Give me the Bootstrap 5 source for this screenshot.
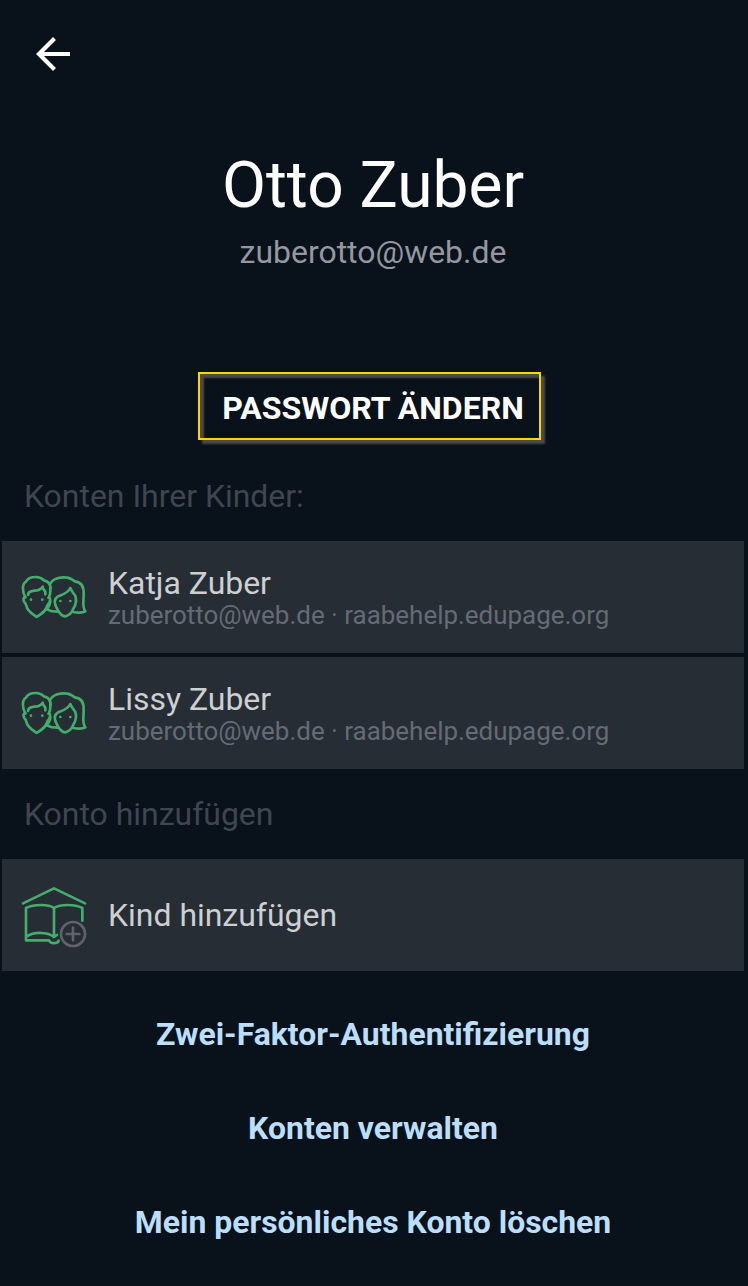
<!DOCTYPE html>
<html lang="de">
<head>
<meta charset="utf-8">
<meta name="viewport" content="width=device-width, initial-scale=1">
<title>Otto Zuber</title>
<link href="https://cdn.jsdelivr.net/npm/bootstrap@5.3.0/dist/css/bootstrap.min.css" rel="stylesheet">
<style>
  body { background: #09111b; color: #fff; font-family: Roboto, sans-serif; font-size: 31.95px; line-height: 38px; }
  .app-screen { height: 1286px; overflow: hidden; white-space: nowrap; padding: 0 4px 0 2px; }
  .back-link { margin: 34px 0 0 31px; width: 40px; height: 40px; }
  .profile-name { font-size: 64px; line-height: 76px; margin-top: 74px; font-weight: 400; }
  .profile-mail { color: #94979f; margin-top: 9px; }
  .btn-password { width: 343px; height: 68px; margin: 101px 0 0 196px; padding: 3px 0 0 7px; border: 2px solid #ffd500; border-radius: 0; color: #fff; font-size: 32px; line-height: 38px; font-weight: 700;
    box-shadow: 4px 4px 2px #4b4b4b, inset 4px 4px 2px #4b4b4b; }
  .section-title { color: #41454f; padding-left: 22px; margin: 26px 0; }
  .btn-password + .section-title { margin-top: 37px; }
  .account-list { gap: 4px; }
  .account { height: 112px; background: #262d35; color: #cdcfd2; padding-left: 18px; gap: 18px; }
  .account-name { line-height: 36px; padding-top: 1px; margin-bottom: -1px; }
  .account-info { font-size: 25.95px; line-height: 30px; color: #666a74; }
  .account svg, .back-link svg { display: block; flex: none; }
  .icon-children { margin-bottom: 2px; }
  .icon-school { margin-top: 4px; }
  .action-list { gap: 56px; margin-top: 44px; }
  .action-link { color: #bbdefb; font-weight: 700; text-decoration: none; }
</style>
</head>
<body>
<svg class="d-none">
  <symbol id="children" viewBox="60 105 210 156">
    <g fill="none" stroke="#43ae6b" stroke-width="8" stroke-linecap="round" stroke-linejoin="round">
      <path d="M76 187C66 169 66 147 78 140C84 127 97 126 108 126C119 126 125 129 132 136C146 139 154 150 151 168C151 177 149 183 146 188"/>
      <path d="M76 187C69 186 69 195 74 203C77 205 78 207 79 212C82 229 98 237 110 246C124 237 138 229 142 212C144 205 150 205 150 196C151 190 149 187 146 188"/>
      <path d="M84 180C84 170 94 168 103 167C116 167 123 162 128 155C128 163 135 166 136 171V178"/>
      <path d="M149 148C156 134 174 126 194 127C207 127 217 133 224 139C246 141 252 158 251 178C251 200 246 216 256 229C248 234 232 233 219 231M151 199C150 211 145 217 141 223C150 228 162 230 174 230"/>
      <path d="M211 159C204 174 188 179 173 185C160 193 165 210 171 221C178 235 188 244 196 244C208 241 216 232 220 221C228 209 230 195 226 183C221 175 215 170 211 159Z"/>
    </g>
    <g fill="#43ae6b"><circle cx="93" cy="194" r="4"/><circle cx="127" cy="194" r="4"/><circle cx="181" cy="198" r="4"/><circle cx="211" cy="198" r="4"/></g>
  </symbol>
</svg>
<main class="app-screen d-flex flex-column">
  <a class="back-link" href="#" aria-label="Zurück">
    <svg width="40" height="40" viewBox="0 0 40 40" fill="none" stroke="#fff" stroke-width="4.2"><path d="M37 20H7M21.500 4.500L6 20L21.500 35.500"/></svg>
  </a>
  <h1 class="profile-name text-center mb-0">Otto Zuber</h1>
  <div class="profile-mail text-center">zuberotto@web.de</div>
  <button class="btn btn-password" type="button">PASSWORT ÄNDERN</button>

  <div class="section-title">Konten Ihrer Kinder:</div>
  <div class="account-list d-flex flex-column">
    <div class="account d-flex align-items-center">
      <svg class="icon-children" width="70" height="52"><use href="#children"/></svg>
      <div><div class="account-name">Katja Zuber</div><div class="account-info">zuberotto@web.de · raabehelp.edupage.org</div></div>
    </div>
    <div class="account d-flex align-items-center">
      <svg class="icon-children" width="70" height="52"><use href="#children"/></svg>
      <div><div class="account-name">Lissy Zuber</div><div class="account-info">zuberotto@web.de · raabehelp.edupage.org</div></div>
    </div>
  </div>

  <div class="section-title">Konto hinzufügen</div>
  <div class="account d-flex align-items-center">
    <svg class="icon-school" width="70" height="65" viewBox="60 105 210 195" fill="none" stroke-linecap="round" stroke-linejoin="round" stroke-width="8">
      <g stroke="#43ae6b">
        <path d="M69 160L162 115L255 160"/>
        <path d="M162 174C145 162 103 162 78 174V271H147C151 282 172 282 176 272M162 174V261C143 245 101 245 79 260M162 174C182 162 223 162 247 174V212M162 261L171 255"/>
      </g>
      <g stroke="#606267"><circle cx="219" cy="252" r="36"/><path d="M219 233V271M200 252H238"/></g>
    </svg>
    <div>Kind hinzufügen</div>
  </div>

  <nav class="action-list d-flex flex-column align-items-center">
    <a class="action-link" href="#">Zwei-Faktor-Authentifizierung</a>
    <a class="action-link" href="#">Konten verwalten</a>
    <a class="action-link" href="#">Mein persönliches Konto löschen</a>
  </nav>
</main>
<script src="https://cdn.jsdelivr.net/npm/bootstrap@5.3.0/dist/js/bootstrap.bundle.min.js"></script>
</body>
</html>
